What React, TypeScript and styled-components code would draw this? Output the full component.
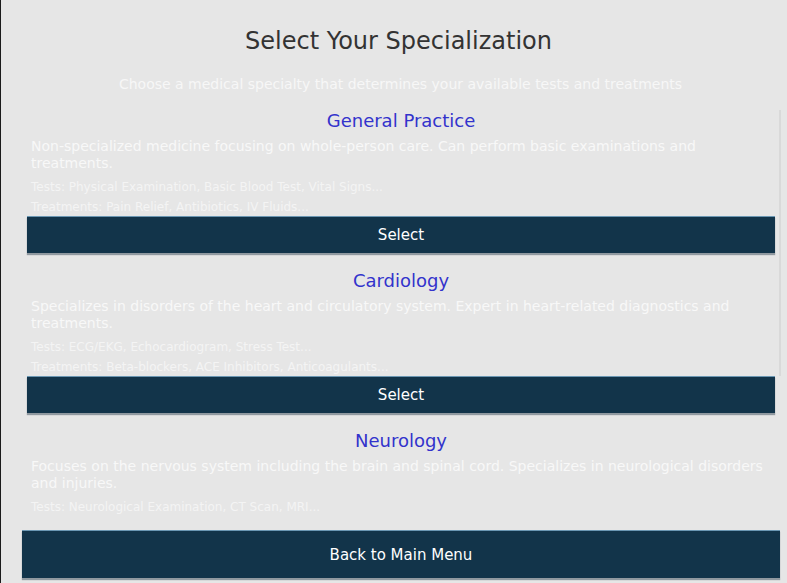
import styled, { createGlobalStyle } from 'styled-components'

interface Specialization {
  id: string
  name: string
  description: string
  tests: string[]
  treatments: string[]
}

const specializations: Specialization[] = [
  {
    id: 'general',
    name: 'General Practice',
    description:
      'Non-specialized medicine focusing on whole-person care. Can perform basic examinations and treatments.',
    tests: ['Physical Examination', 'Basic Blood Test', 'Vital Signs'],
    treatments: ['Pain Relief', 'Antibiotics', 'IV Fluids'],
  },
  {
    id: 'cardiology',
    name: 'Cardiology',
    description:
      'Specializes in disorders of the heart and circulatory system. Expert in heart-related diagnostics and treatments.',
    tests: ['ECG/EKG', 'Echocardiogram', 'Stress Test'],
    treatments: ['Beta-blockers', 'ACE Inhibitors', 'Anticoagulants'],
  },
  {
    id: 'neurology',
    name: 'Neurology',
    description:
      'Focuses on the nervous system including the brain and spinal cord. Specializes in neurological disorders and injuries.',
    tests: ['Neurological Examination', 'CT Scan', 'MRI'],
    treatments: ['Anticonvulsants', 'Physical Therapy', 'Steroids'],
  },
  {
    id: 'pediatrics',
    name: 'Pediatrics',
    description:
      'Medical care of infants, children and adolescents. Specializes in growth, development and childhood illnesses.',
    tests: ['Growth Assessment', 'Developmental Screening', 'Basic Blood Test'],
    treatments: ['Vaccinations', 'Antibiotics', 'Oral Rehydration'],
  },
]

const GlobalStyle = createGlobalStyle`
  html, body {
    margin: 0;
    padding: 0;
    background: #e6e6e6;
  }
  body {
    font-family: "DejaVu Sans", "Liberation Sans", sans-serif;
  }
`

const Screen = styled.div`
  box-sizing: border-box;
  height: 583px;
  display: flex;
  flex-direction: column;
  padding: 0 6px 5px 21px;
  border-left: 1px solid #1b1b1b;
  background: #e6e6e6;
  overflow: hidden;
`

const Title = styled.h1`
  margin: 27px 6px 0 0;
  font-size: 24px;
  line-height: 28px;
  font-weight: normal;
  color: #333333;
  text-align: center;
`

const Subtitle = styled.p`
  margin: 21px 2px 0 0;
  font-size: 14px;
  line-height: 17px;
  color: #f7f7f7;
  text-align: center;
`

const ListFrame = styled.div`
  position: relative;
  margin-top: 17px;
  height: 407px;
  flex: none;
`

const List = styled.div`
  box-sizing: border-box;
  height: 100%;
  overflow: hidden;
  padding: 0 6px 0 5px;
  display: flex;
  flex-direction: column;
  gap: 17px;
`

const ScrollThumb = styled.div`
  position: absolute;
  top: 0;
  right: 0;
  width: 2px;
  height: 266px;
  background: #d9d9d9;
`

const Card = styled.div`
  flex: none;
  display: flex;
  flex-direction: column;
`

const Name = styled.h2`
  margin: 0;
  font-size: 18px;
  line-height: 21px;
  font-weight: normal;
  color: #3333cc;
  text-align: center;
`

const Description = styled.p`
  margin: 7px 4px 0;
  font-size: 14px;
  line-height: 17px;
  color: #f8f8f8;
`

const Detail = styled.p<{ $gap: number }>`
  margin: ${(p) => p.$gap}px 4px 0;
  font-size: 12px;
  line-height: 14px;
  color: #f4f4f4;
`

const Button = styled.button<{ $tall?: boolean }>`
  box-sizing: border-box;
  width: 100%;
  height: ${(p) => (p.$tall ? 48 : 37)}px;
  border: none;
  border-top: 1px solid #6b97b3;
  background: #12344a;
  color: #ffffff;
  font-family: inherit;
  font-size: 15px;
  box-shadow: 0 2px 1px rgba(40, 60, 75, 0.45);
  cursor: pointer;
`

const SelectButton = styled(Button)`
  margin-top: 2px;
`

const BackButton = styled(Button)`
  margin-top: 13px;
  width: auto;
  margin-right: 1px;
`

export default function App() {
  return (
    <>
      <GlobalStyle />
      <Screen>
        <Title>Select Your Specialization</Title>
        <Subtitle>Choose a medical specialty that determines your available tests and treatments</Subtitle>
        <ListFrame>
          <List>
            {specializations.map((spec) => (
              <Card key={spec.id}>
                <Name>{spec.name}</Name>
                <Description>{spec.description}</Description>
                <Detail $gap={8}>Tests: {spec.tests.join(', ')}...</Detail>
                <Detail $gap={6}>Treatments: {spec.treatments.join(', ')}...</Detail>
                <SelectButton>Select</SelectButton>
              </Card>
            ))}
          </List>
          <ScrollThumb />
        </ListFrame>
        <BackButton $tall>Back to Main Menu</BackButton>
      </Screen>
    </>
  )
}
